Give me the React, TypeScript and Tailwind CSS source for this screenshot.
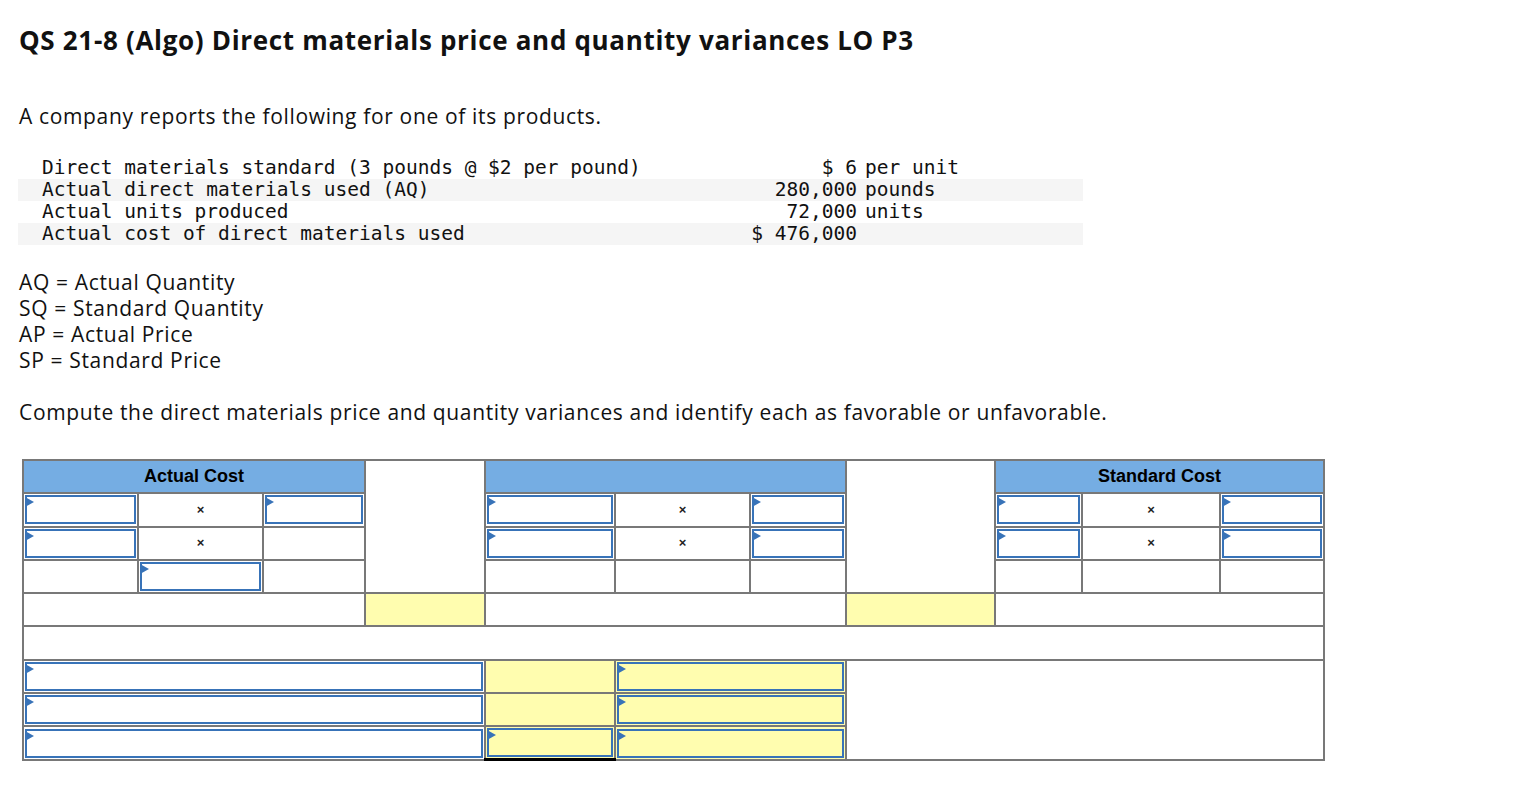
const body = "font-['Open_Sans','Lato',sans-serif]";
const mono = "font-['DejaVu_Sans_Mono','Liberation_Mono',monospace]";

const facts = [
  { label: 'Direct materials standard (3 pounds @ $2 per pound)', value: '$ 6', unit: 'per unit' },
  { label: 'Actual direct materials used (AQ)', value: '280,000', unit: 'pounds' },
  { label: 'Actual units produced', value: '72,000', unit: 'units' },
  { label: 'Actual cost of direct materials used', value: '$ 476,000', unit: '' },
];

const cell = 'border-2 border-[#787878] h-[33.3px] p-0';
const text = 'text-[21px] leading-[26px] tracking-[0.65px]';

function Entry({ yellow = false }: { yellow?: boolean }) {
  return (
    <div className="p-px h-[31px]">
      <div
        className={`relative h-full border-2 border-[#3873b8] ${yellow ? 'bg-[#fffdaf]' : 'bg-white'}`}
      >
        <span className="absolute -left-[2px] top-0 w-0 h-0 border-y-[5px] border-y-transparent border-l-[9px] border-l-[#3873b8]" />
      </div>
    </div>
  );
}

function Times() {
  return (
    <td className={`${cell} text-center text-[13px] font-bold text-[#222] font-['Liberation_Sans',Arial,sans-serif]`}>
      ×
    </td>
  );
}

export default function App() {
  return (
    <div className={`min-h-screen bg-white text-[#111] ${body}`}>
      <div className="pl-[19px] pt-[24px]">
        <h1 className="text-[26px] leading-[32px] font-bold tracking-[0.68px]">
          QS 21-8 (Algo) Direct materials price and quantity variances LO P3
        </h1>

        <p className={`mt-[47px] ${text}`}>
          A company reports the following for one of its products.
        </p>

        <div className={`mt-[28px] -ml-[1px] w-[1065px] ${mono} text-[19.5px] leading-[22px] text-[#111]`}>
          {facts.map((f, i) => (
            <div key={f.label} className={`flex pl-[24px] ${i % 2 === 1 ? 'bg-[#f5f5f5]' : ''}`}>
              <div className="w-[698px] whitespace-pre">{f.label}</div>
              <div className="w-[117px] text-right whitespace-pre">{f.value}</div>
              <div className="pl-[8px] whitespace-pre">{f.unit}</div>
            </div>
          ))}
        </div>

        <div className={`mt-[24px] ${text}`}>
          <div>AQ = Actual Quantity</div>
          <div>SQ = Standard Quantity</div>
          <div>AP = Actual Price</div>
          <div>SP = Standard Price</div>
        </div>

        <p className={`mt-[26px] ${text}`}>
          Compute the direct materials price and quantity variances and identify each as favorable or unfavorable.
        </p>

        <table className="mt-[34px] ml-[3px] border-collapse table-fixed w-[1303px] font-['Liberation_Sans',Arial,sans-serif]">
          <colgroup>
            <col className="w-[115px]" />
            <col className="w-[125px]" />
            <col className="w-[102px]" />
            <col className="w-[120px]" />
            <col className="w-[130px]" />
            <col className="w-[135px]" />
            <col className="w-[96px]" />
            <col className="w-[149px]" />
            <col className="w-[87px]" />
            <col className="w-[138px]" />
            <col className="w-[104px]" />
          </colgroup>
          <tbody>
            <tr>
              <td colSpan={3} className={`${cell} bg-[#75ade3] text-center font-bold text-[18px] text-black`}>
                Actual Cost
              </td>
              <td rowSpan={4} className={`${cell} bg-white`} />
              <td colSpan={3} className={`${cell} bg-[#75ade3]`} />
              <td rowSpan={4} className={`${cell} bg-white`} />
              <td colSpan={3} className={`${cell} bg-[#75ade3] text-center font-bold text-[18px] text-black`}>
                Standard Cost
              </td>
            </tr>
            <tr>
              <td className={cell}><Entry /></td>
              <Times />
              <td className={cell}><Entry /></td>
              <td className={cell}><Entry /></td>
              <Times />
              <td className={cell}><Entry /></td>
              <td className={cell}><Entry /></td>
              <Times />
              <td className={cell}><Entry /></td>
            </tr>
            <tr>
              <td className={cell}><Entry /></td>
              <Times />
              <td className={cell} />
              <td className={cell}><Entry /></td>
              <Times />
              <td className={cell}><Entry /></td>
              <td className={cell}><Entry /></td>
              <Times />
              <td className={cell}><Entry /></td>
            </tr>
            <tr>
              <td className={cell} />
              <td className={`${cell} border-t-black`}><Entry /></td>
              <td className={cell} />
              <td className={cell} />
              <td className={cell} />
              <td className={cell} />
              <td className={cell} />
              <td className={cell} />
              <td className={cell} />
            </tr>
            <tr>
              <td colSpan={3} className={cell} />
              <td className={`${cell} bg-[#fffdaf]`} />
              <td colSpan={3} className={cell} />
              <td className={`${cell} bg-[#fffdaf]`} />
              <td colSpan={3} className={cell} />
            </tr>
            <tr>
              <td colSpan={11} className={cell} />
            </tr>
            <tr>
              <td colSpan={4} className={cell}><Entry /></td>
              <td className={`${cell} bg-[#fffdaf]`} />
              <td colSpan={2} className={`${cell} bg-[#fffdaf]`}><Entry yellow /></td>
              <td rowSpan={3} colSpan={4} className={`${cell} bg-white`} />
            </tr>
            <tr>
              <td colSpan={4} className={cell}><Entry /></td>
              <td className={`${cell} bg-[#fffdaf]`} />
              <td colSpan={2} className={`${cell} bg-[#fffdaf]`}><Entry yellow /></td>
            </tr>
            <tr>
              <td colSpan={4} className={cell}><Entry /></td>
              <td className={`${cell} bg-[#fffdaf] border-t-black border-b-[3px] border-b-black`}>
                <Entry yellow />
              </td>
              <td colSpan={2} className={`${cell} bg-[#fffdaf]`}><Entry yellow /></td>
            </tr>
          </tbody>
        </table>
      </div>
    </div>
  );
}
